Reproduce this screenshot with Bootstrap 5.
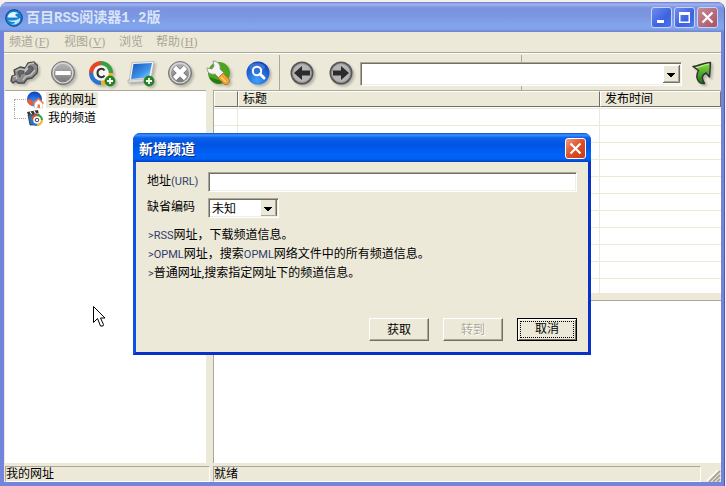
<!DOCTYPE html>
<html lang="zh-CN">
<head>
<meta charset="utf-8">
<meta name="viewport" content="width=device-width, initial-scale=1">
<title>百目RSS阅读器1.2版</title>
<link href="https://cdn.jsdelivr.net/npm/bootstrap@5.3.0/dist/css/bootstrap.min.css" rel="stylesheet">
<style>
:root { --face:#ece9d8; --shade:#aca899; --dark:#716f64; }
body { background:#f3f1e9; color:#000; font:12px/16px "Liberation Sans","Noto Sans CJK SC",sans-serif; }
button { font:inherit; color:inherit; }
.app-window { height:calc(100vh - 2px); margin:2px 1px 0 0; background:#7284db; border-radius:8px 8px 0 0; border-right:1px solid #4f57b8; padding:0 3px 4px 4px; overflow:hidden; }
.title-strip { height:30px; margin:0 -3px 0 -4px; padding:1px 6px 0 5px; background:linear-gradient(#6478d4 0,#a0b4f0 2px,#7b93de 6px,#7b96e1 14px,#82a4ec 23px,#80a3ea 27px,#7084d0 30px); }
.title-name { font:bold 14px/20px "Liberation Mono","Noto Sans CJK SC",monospace; color:#d8e4f8; margin-left:3px; }
.win-btn { width:21px; height:21px; padding:0; border:1px solid #c8d4f6; border-radius:3px; background:linear-gradient(135deg,#6e8cf0,#3c62e0 60%,#4e76ee); display:flex; align-items:center; justify-content:center; }
.win-btn.quit { background:linear-gradient(135deg,#c58a9c,#aa5263); }
.client { background:var(--face); min-height:0; flex:1; padding-left:1px; }
.app-menu { height:21px; padding:0 5px; gap:13px; border-bottom:1px solid var(--shade); color:#a8a596; margin-left:-1px; }
.app-menu button { border:0; padding:0; background:none; }
.hotkey { display:inline-block; width:18px; text-align:center; font-family:"Liberation Serif",serif; }
.tool-strip { height:37px; padding-top:1px; border-top:1px solid #fff; margin-left:-1px; }
.tool { width:39px; height:34px; padding:0; border:0; background:none; flex:none; }
.tool svg { filter:drop-shadow(2px 2px 1px #8888); }
.tool-sep { width:1px; background:var(--shade); align-self:stretch; margin:0 2px 0 2px; flex:none; }
.address { align-self:stretch; padding-top:3px; background:linear-gradient(var(--shade),var(--shade)) 50% 0/1px 100% no-repeat; }
.sunken { border:1px solid; border-color:var(--shade) #fff #fff var(--shade); box-shadow:inset 1px 1px var(--dark),inset -1px -1px #f1efe2; border-radius:0; background-color:#fff; color:#000; }
.sunken:focus { outline:0; }
select.sunken { appearance:none; padding:0 20px 0 3px; font:12px/16px "Noto Sans CJK SC",sans-serif; background:#fff url("data:image/svg+xml,%3Csvg xmlns='http://www.w3.org/2000/svg' width='17' height='18'%3E%3Cpath fill='%23ece9d8' d='M0 0h17v18H0z'/%3E%3Cpath d='M.5 18V.5H17' fill='none' stroke='%23fff'/%3E%3Cpath d='M0 17.5h16.5V0' fill='none' stroke='%23716f64'/%3E%3Cpath d='M1 16.5h14.5V1' fill='none' stroke='%23aca899'/%3E%3Cpath d='M4 8h8v1h-1v1h-1v1H9v1H7v-1H6v-1H5V9H4z'/%3E%3C/svg%3E") right 1px center no-repeat; }
.address select { height:24px; }
.tree-pane { width:201px; flex:none; background:#fff; border-top:1px solid var(--shade); }
.tree { padding:0 0 0 9px; margin:0; }
.tree li { height:18px; display:flex; align-items:center; }
.tree li::before { content:""; width:12px; border-left:1px dotted var(--shade); background:repeating-linear-gradient(90deg,var(--shade) 0 1px,#fff 1px 2px) 0 50%/100% 1px no-repeat; }
.tree li:first-child::before { height:10px; align-self:flex-end; background-position:0 0; }
.tree li:last-child::before { height:10px; align-self:flex-start; background-position:0 100%; }
.tree button { border:0; background:none; padding:0 2px; margin-left:2px; }
.tree button.chosen { background:var(--face); }
.tree svg { flex:none; }
.right-side { margin-left:7px; min-width:0; }
.list-pane { flex:5 1 0; min-height:0; overflow:hidden; background:#fff; border:1px solid var(--shade); border-width:1px 0 0 1px; }
.grid-list { width:100%; table-layout:fixed; border-collapse:separate; border-spacing:0; }
.grid-list th { height:16px; padding:0 0 0 4px; font-weight:400; line-height:13px; background:var(--face); border:1px solid; border-color:#fff var(--dark) var(--dark) #fff; }
.grid-list td { height:17px; padding:0; border:solid var(--face); border-width:0 1px 1px 0; }
.grid-list td:last-child { border-right:0; }
.grid-list tbody tr:first-child td { height:19px; background:linear-gradient(var(--face),var(--face)) 0 1px/100% 1px no-repeat; }
.view-pane { flex:4 1 0; min-height:0; margin-top:7px; background:#fff; border:1px solid var(--shade); border-width:1px 0 0 1px; }
.status { height:19px; padding-top:3px; gap:3px; flex:none; }
.status > div { border:1px solid; border-color:var(--shade) #fff #fff var(--shade); line-height:14px; height:16px; }
.status .selected-name { width:205px; flex:none; }
.popup { position:absolute; left:133px; top:133px; width:458px; background:var(--face); border:3px solid; border-color:#0a52e8 #0831c8 #0831c8 #0a52e8; border-top:0; border-radius:7px 7px 0 0; }
.popup-title { height:29px; margin:0 -3px; padding:1px 5px 0 6px; border-radius:7px 7px 0 0; background:linear-gradient(#0b4fd0 0,#3c92ff 2px,#0a5ee8 5px,#0054e3 12px,#0063fa 22px,#0060f4 26px,#0340c0 29px); }
.popup-title h1 { font:bold 14px/20px "Noto Sans CJK SC",sans-serif; color:#fff; text-shadow:1px 1px #0a2a80; margin:0; }
.popup .win-btn { border-color:#fff; }
.popup .win-btn.quit { background:linear-gradient(135deg,#ee9a7c,#de4f2a 50%,#c83a10); }
.popup-form { padding:10px 11px 11px 10px; font:11px/20px Roboto,"Noto Sans CJK SC",sans-serif; }
.cjk { font-size:12px; line-height:12px; }
.field { gap:6px; }
.field > div { height:20px; }
.field label { width:62px; flex:none; padding-left:1px; color:#334466; }
.field label .cjk, .tips .cjk { color:#000; }
.field .sunken { height:20px; }
.field input { padding:0 4px; }
.field select { width:71px; }
.tips { margin:8px 0 35px 2px; padding:0; color:#343a6a; white-space:nowrap; line-height:19px; }
.push { width:60px; height:23px; padding:0; border:1px solid; border-color:#fff var(--dark) var(--dark) #fff; box-shadow:inset -1px -1px var(--shade); background:var(--face); font-size:12px; line-height:18px; color:#000; }
.push:disabled { color:var(--shade); text-shadow:1px 1px #fff; }
.push.preset { border-color:#000; box-shadow:inset 1px 1px #fff,inset -1px -1px var(--dark); padding:2px; }
.push.preset span { display:block; border:1px dotted #000; line-height:14px; height:17px; }
.pointer { position:absolute; left:93px; top:306px; }
</style>
<script src="https://cdn.jsdelivr.net/npm/bootstrap@5.3.0/dist/js/bootstrap.bundle.min.js"></script>
</head>
<body class="overflow-hidden">
<svg width="0" height="0" class="position-absolute" aria-hidden="true">
  <defs>
    <linearGradient id="gray" x2="0" y2="1"><stop stop-color="#bbb"/><stop offset="1" stop-color="#737373"/></linearGradient>
    <radialGradient id="blue" cx=".45" cy=".8" r=".8"><stop stop-color="#42a0ff"/><stop offset="1" stop-color="#0b3fb8"/></radialGradient>
    <linearGradient id="screen" x2="1" y2="1"><stop stop-color="#1454ba"/><stop offset=".6" stop-color="#3f94ea"/><stop offset="1" stop-color="#a8dcff"/></linearGradient>
    <linearGradient id="green" x2="0" y2="1"><stop stop-color="#8fe04c"/><stop offset="1" stop-color="#12720d"/></linearGradient>
    <g id="plus"><circle cx="22" cy="22" r="5" fill="#208a20" stroke="#136013" stroke-width=".6"/><path d="M22 19v6M19 22h6" stroke="#fff" stroke-width="1.800"/></g>
    <g id="wheel" fill="none" stroke-width="5"><path d="M4.500 15A9.500 9.500 0 0 1 14 5.500" stroke="#e2482a"/><path d="M14 5.500A9.500 9.500 0 0 1 23.500 15" stroke="#37a044"/><path d="M23.500 15A9.500 9.500 0 0 1 14 24.500" stroke="#f3b321"/><path d="M14 24.500A9.500 9.500 0 0 1 4.500 15" stroke="#2b74d2"/></g>
    <g id="disc"><circle cx="14" cy="14" r="11.500" fill="url(#gray)" stroke="#777"/><circle cx="14" cy="14" r="9.800" fill="none" stroke="#d8d8d8" stroke-width="1.300"/></g>
    <g id="ring"><circle cx="14" cy="14" r="11.500" fill="#555"/><circle cx="14" cy="14" r="9.500" fill="#b5b5b5" stroke="#909090"/></g>
  </defs>
</svg>

<div class="app-window d-flex flex-column">
  <header class="title-strip d-flex align-items-center flex-shrink-0">
    <svg width="18" height="18" viewBox="0 0 18 18" aria-hidden="true"><circle cx="9" cy="9" r="8.300" fill="#1385d8" stroke="#123e82"/><path d="M2.500 8.500C3 3 10 1 14.500 5c-2-1-4 0-4.500 1l3 2.500z" fill="#e8f7ff"/><path d="M3 11c3 1 8 1 12-2 1 4-4 8-9 6 3 0 4-1 4-2-3 0-5 0-7-2z" fill="#c6eafd"/></svg>
    <span class="title-name me-auto">百目RSS阅读器1.2版</span>
    <div class="d-flex" style="gap:2px">
      <button class="win-btn" aria-label="最小化"><svg width="13" height="13"><path d="M2 9h7v3H2z" fill="#fff"/></svg></button>
      <button class="win-btn" aria-label="最大化"><svg width="13" height="13"><path d="M1 1h11v11H1zM2.500 4v6.500h8V4z" fill="#fff" fill-rule="evenodd"/></svg></button>
      <button class="win-btn quit" aria-label="关闭程序"><svg width="13" height="13"><path d="M1.500 1.500l10 10m0-10l-10 10" stroke="#fff" stroke-width="2.200"/></svg></button>
    </div>
  </header>

  <div class="client d-flex flex-column">
    <nav class="app-menu d-flex align-items-center flex-shrink-0" aria-label="菜单">
      <button>频道<span class="hotkey">(<u>F</u>)</span></button>
      <button>视图<span class="hotkey">(<u>V</u>)</span></button>
      <button>浏览</button>
      <button>帮助<span class="hotkey">(<u>H</u>)</span></button>
    </nav>

    <div class="tool-strip d-flex align-items-center flex-shrink-0" role="toolbar">
      <button class="tool" aria-label="链接"><svg width="28" height="28" viewBox="0 0 28 28"><g stroke="#484848" stroke-linejoin="round"><path d="M1 22l1-5 3-1-1-5 6-3 5 1 3-5 6-1 4 4-1 7-5 5-5 1-3 4-6 0-2-2-3 2z" fill="#8c8c8c" stroke-width="1.300"/><path d="M8 14c0-3 4-4 6-2l-1 3c-2-1-3 0-3 3zM18 8c3-2 6 0 5 3l-5 5-3-1z" fill="#666" stroke-width=".8"/></g><path d="M3 18l3-1 1 3M6 12l4-2 5 1 4-6 5-1M15 13l3-4M13 21l3-4 5-1 4-5" fill="none" stroke="#c2c2c2" stroke-width="1.300"/></svg></button>
      <button class="tool" aria-label="删除"><svg width="28" height="28"><use href="#disc"/><path d="M6 11.500h16v5H6z" fill="#fff" stroke="#777" stroke-width=".6"/></svg></button>
      <button class="tool" aria-label="新增频道"><svg width="28" height="28"><g transform="translate(-1 -1)"><use href="#wheel"/><circle cx="14" cy="15" r="7.800" fill="#f4f4f2"/><path d="M17.500 12.500c-2-3-7-2-7 2.500s5 5.500 7 2.500" fill="none" stroke="#333" stroke-width="2"/></g><use href="#plus"/></svg></button>
      <button class="tool" aria-label="新增网址"><svg width="28" height="28"><path d="M5 3.500L27 2.500l-3 17.500L2 22.500z" fill="#f5f5f5" stroke="#aaa" stroke-width=".7"/><path d="M6.500 5L25 4l-3 14.500L4 20z" fill="url(#screen)"/><path d="M1 21l20-1.500v3L1 24z" fill="#ddd" stroke="#999" stroke-width=".5"/><use href="#plus"/></svg></button>
      <button class="tool" aria-label="停止"><svg width="28" height="28"><use href="#disc"/><path d="M8.500 8.500l11 11m0-11l-11 11" stroke="#666" stroke-width="6"/><path d="M8.500 8.500l11 11m0-11l-11 11" stroke="#fff" stroke-width="4.600"/></svg></button>
      <button class="tool" aria-label="设置"><svg width="28" height="28"><circle cx="14" cy="14" r="11" fill="#4da51c"/><path d="M4 18A11 11 0 0 0 20 23z" fill="#267a13"/><path d="M8 2l1 5-2 3-5-1c0 5 4 7 8 6l5 5 5-5-5-5c1-4-2-8-7-8z" fill="#f4f4f4" stroke="#888" stroke-width=".8"/><path d="M13 19l5-5 6 6c2 3-2 7-5 5z" fill="#f2a230" stroke="#9b6418" stroke-width=".7"/><path d="M16 18l5 5" stroke="#ffd27a" stroke-width="1.300"/></svg></button>
      <button class="tool" aria-label="搜索"><svg width="28" height="28"><circle cx="14" cy="14" r="11.500" fill="url(#blue)"/><ellipse cx="13" cy="8" rx="8" ry="4" fill="#fff" opacity=".18"/><circle cx="13" cy="12" r="4.200" fill="#2d74dd" stroke="#fff" stroke-width="2"/><path d="M16 15l4 4" stroke="#fff" stroke-width="3" stroke-linecap="round"/></svg></button>
      <span class="tool-sep"></span>
      <button class="tool" aria-label="后退"><svg width="28" height="28"><use href="#ring"/><path d="M6 14l8-7v4.500h8v5h-8V21z" fill="#2c2c2c"/></svg></button>
      <button class="tool" aria-label="前进"><svg width="28" height="28"><use href="#ring"/><path d="M22 14l-8-7v4.500H6v5h8V21z" fill="#2c2c2c"/></svg></button>
      <div class="address flex-fill d-flex align-items-center"><select class="sunken w-100" aria-label="网址"><option></option></select></div>
      <button class="tool" aria-label="转到网址"><svg width="24" height="26" viewBox="0 0 24 26"><path d="M3 6.500C9 6 12 3 20.500 2.500L19.500 17l-3.500-4c-4 2-5 5-1.500 10.500-6 1-10-6-6-13z" fill="url(#green)" stroke="#333" stroke-width="1.500" stroke-linejoin="round"/><path d="M6 7.500c5 0 8-3 13-3.500" fill="none" stroke="#b9f080" stroke-width="1.200"/></svg></button>
    </div>

    <main class="d-flex flex-fill" style="min-height:0">
      <aside class="tree-pane">
        <ul class="tree list-unstyled">
          <li><svg width="18" height="18" class="order-1"><circle cx="8.500" cy="8" r="7.500" fill="url(#blue)"/><path d="M1 9c3-2 5 0 6 2s-1 4-1 4-5-2-5-6z" fill="#ef5b31"/><path d="M8.500 11v6h8v-6l-4-3z" fill="#fff" stroke="#bbb" stroke-width=".5"/><path d="M11.500 13.500h2.500V17h-2.500z" fill="#e97a3c"/><path d="M7.500 12.500l5-5 5 5" fill="none" stroke="#f0703f" stroke-width="1.500"/></svg><button class="chosen order-2">我的网址</button></li>
          <li><svg width="18" height="18" class="order-1"><path d="M2 6l11-1v11H4z" fill="#2375bd" stroke="#222" stroke-width=".7"/><path d="M1 3l11-2 .5 3L2 6z" fill="#333"/><path d="M4 2.500l1.500 2.500M8 1.800l1.500 2.500" stroke="#fff" stroke-width="1.200"/><g transform="translate(4 3.500) scale(.5)"><use href="#wheel"/><circle cx="14" cy="15" r="7.500" fill="#fff"/><circle cx="14" cy="15" r="3.500" fill="none" stroke="#345" stroke-width="2"/></g></svg><button class="order-2">我的频道</button></li>
        </ul>
      </aside>
      <section class="right-side flex-fill d-flex flex-column">
        <div class="list-pane">
          <table class="grid-list">
            <colgroup><col style="width:24px"><col><col style="width:121px"></colgroup>
            <thead><tr><th aria-label="标记"></th><th>标题</th><th>发布时间</th></tr></thead>
            <tbody>
              <tr><td></td><td></td><td></td></tr><tr><td></td><td></td><td></td></tr><tr><td></td><td></td><td></td></tr><tr><td></td><td></td><td></td></tr><tr><td></td><td></td><td></td></tr><tr><td></td><td></td><td></td></tr><tr><td></td><td></td><td></td></tr><tr><td></td><td></td><td></td></tr><tr><td></td><td></td><td></td></tr><tr><td></td><td></td><td></td></tr><tr><td></td><td></td><td></td></tr>
            </tbody>
          </table>
        </div>
        <div class="view-pane"></div>
      </section>
    </main>

    <footer class="status d-flex">
      <div class="selected-name">我的网址</div>
      <div class="flex-fill">就绪</div>
      <svg width="17" height="16" aria-hidden="true"><path d="M3 15L14 4M7 15l7-7M11 15l3-3" stroke="#fff" stroke-width="1.500"/><path d="M5 16L16 5M9 16l7-7M13 16l3-3" stroke="#aca899" stroke-width="2"/></svg>
    </footer>
  </div>
</div>

<div class="popup" role="dialog" aria-labelledby="popup-name">
  <div class="popup-title d-flex align-items-center justify-content-between">
    <h1 id="popup-name">新增频道</h1>
    <button class="win-btn quit" aria-label="关闭"><svg width="13" height="13"><path d="M1.500 1.500l10 10m0-10l-10 10" stroke="#fff" stroke-width="2.200"/></svg></button>
  </div>
  <form class="popup-form">
    <div class="field d-flex flex-column">
      <div class="d-flex"><label for="url"><span class="cjk">地址</span>(URL)</label><input id="url" type="text" class="sunken flex-fill"></div>
      <div class="d-flex"><label for="enc"><span class="cjk">缺省编码</span></label><select id="enc" class="sunken"><option>未知</option></select></div>
    </div>
    <ul class="tips list-unstyled">
      <li>&gt;RSS<span class="cjk">网址，下载频道信息。</span></li>
      <li>&gt;OPML<span class="cjk">网址，搜索</span>OPML<span class="cjk">网络文件中的所有频道信息。</span></li>
      <li>&gt;<span class="cjk">普通网址,搜索指定网址下的频道信息。</span></li>
    </ul>
    <div class="d-flex justify-content-end" style="gap:14px">
      <button type="button" class="push">获取</button>
      <button type="button" class="push" disabled>转到</button>
      <button type="button" class="push preset"><span>取消</span></button>
    </div>
  </form>
</div>

<svg class="pointer" width="13" height="22" aria-hidden="true"><path d="M.5 .5v16l4-4 3 7.500h2.500l.500-1.500-3-6.500h4.500z" fill="#fff" stroke="#000"/></svg>
</body>
</html>
